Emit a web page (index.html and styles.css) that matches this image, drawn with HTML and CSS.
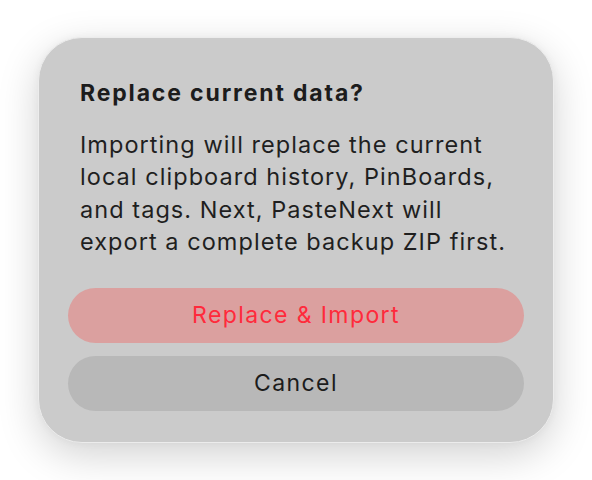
FILE: index.html
```html
<!DOCTYPE html>
<html>
<head>
<meta charset="utf-8">
<link rel="stylesheet" href="styles.css">
</head>
<body>
<div class="stage">
  <div class="dialog">
    <h1 class="title">Replace current data?</h1>
    <p class="message">Importing will replace the current local clipboard history, PinBoards, and tags. Next, PasteNext will export a complete backup ZIP first.</p>
    <div class="actions">
      <button class="btn btn-danger">Replace &amp; Import</button>
      <button class="btn btn-cancel">Cancel</button>
    </div>
  </div>
</div>
</body>
</html>
```

FILE: styles.css
```css
html, body {
  margin: 0;
  padding: 0;
  background: #ffffff;
}
.stage {
  width: 592px;
  height: 480px;
  padding: 37px 38px;
  box-sizing: border-box;
  font-family: Inter, "Noto Sans", sans-serif;
}
.dialog {
  width: 516px;
  height: 406px;
  box-sizing: border-box;
  background: #cbcbcb;
  border: 1px solid #ececec;
  border-radius: 44px;
  box-shadow: 0 12px 40px rgba(0, 0, 0, 0.18), 0 0 8px rgba(0, 0, 0, 0.04);
  padding: 41px 29px 29px;
  display: flex;
  flex-direction: column;
}
.title {
  margin: 0 12px;
  font-size: 23px;
  line-height: 28px;
  font-weight: 700;
  letter-spacing: 1.85px;
  color: #1c1c1c;
}
.message {
  margin: 22px 12px 0;
  font-size: 23.5px;
  line-height: 32.4px;
  font-weight: 400;
  letter-spacing: 1.05px;
  color: #1f1f1f;
}
.actions {
  margin-top: 29px;
  display: flex;
  flex-direction: column;
  gap: 13px;
}
.btn {
  height: 55px;
  border: none;
  border-radius: 28px;
  font-family: inherit;
  font-size: 23px;
  letter-spacing: 1.4px;
  padding: 0;
}
.btn-danger {
  background: #dba09f;
  color: #ff2a3b;
}
.btn-cancel {
  background: #b8b8b8;
  color: #1c1c1c;
}
```
